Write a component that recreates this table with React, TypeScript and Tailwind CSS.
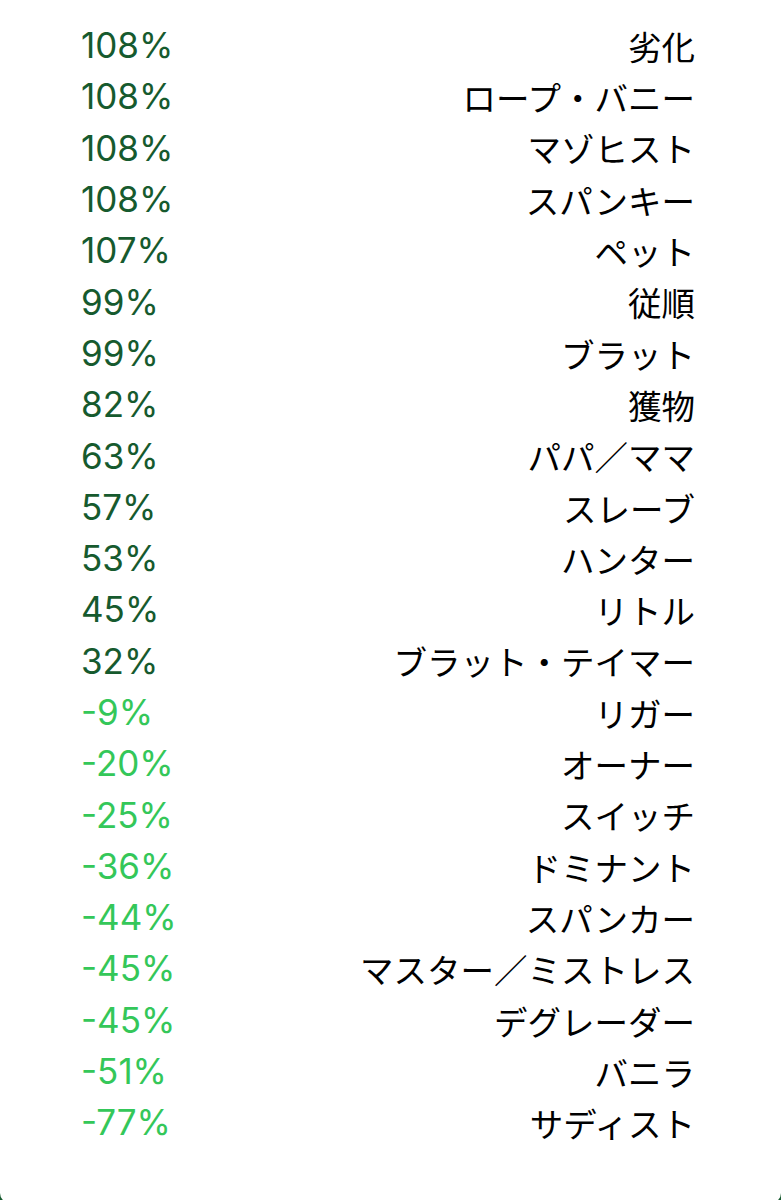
const rows: [string, string][] = [
  ["108%", "劣化"],
  ["108%", "ロープ・バニー"],
  ["108%", "マゾヒスト"],
  ["108%", "スパンキー"],
  ["107%", "ペット"],
  ["99%", "従順"],
  ["99%", "ブラット"],
  ["82%", "獲物"],
  ["63%", "パパ／ママ"],
  ["57%", "スレーブ"],
  ["53%", "ハンター"],
  ["45%", "リトル"],
  ["32%", "ブラット・テイマー"],
  ["-9%", "リガー"],
  ["-20%", "オーナー"],
  ["-25%", "スイッチ"],
  ["-36%", "ドミナント"],
  ["-44%", "スパンカー"],
  ["-45%", "マスター／ミストレス"],
  ["-45%", "デグレーダー"],
  ["-51%", "バニラ"],
  ["-77%", "サディスト"],
];

export default function App() {
  return (
    <div className="h-[1200px] w-[781px] overflow-hidden bg-[#165a2e]">
      <div className="h-[1203px] rounded-b-[10px] bg-white pt-[20px] pl-[81px] pr-[86px]">
        {rows.map(([pct, label], i) => (
          <div key={i} className="flex h-[51.3px] items-center justify-between">
            <span
              className={`font-['Inter',sans-serif] text-[35px] leading-none ${
                pct.startsWith("-") ? "text-[#34c759]" : "text-[#165a2e]"
              }`}
            >
              {pct}
            </span>
            <span className="font-['Noto_Sans_CJK_JP',sans-serif] text-[33.5px] leading-none text-black">
              {label}
            </span>
          </div>
        ))}
      </div>
    </div>
  );
}
